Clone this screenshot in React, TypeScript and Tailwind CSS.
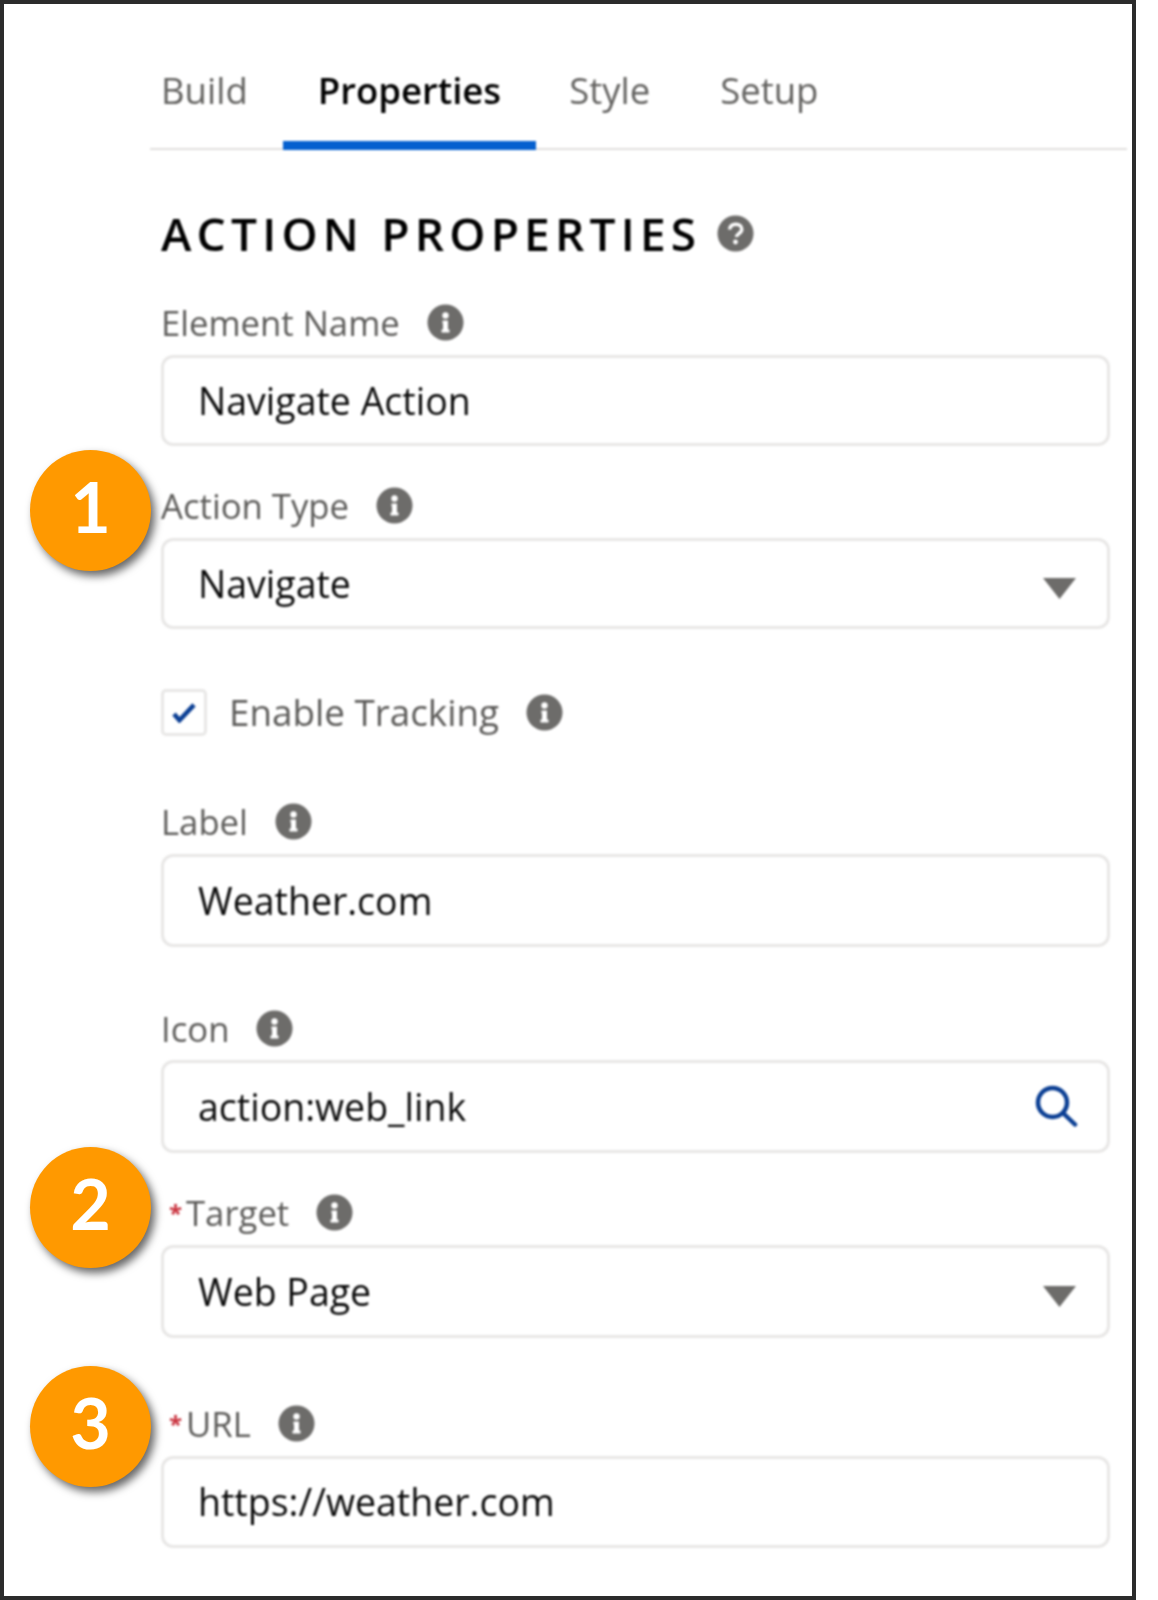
import React from "react";

const Info = () => (
  <svg width="37" height="37" viewBox="0 0 37 37" className="ml-[27px] shrink-0">
    <circle cx="18.5" cy="18.5" r="18" fill="#6d6c6a" />
    <circle cx="18.5" cy="11.5" r="3.2" fill="#fff" />
    <path d="M15.5 16.5h5.5v9h1.5v3h-8v-3h1.5v-6h-0.5z" fill="#fff" />
  </svg>
);

const Help = () => (
  <svg width="37" height="37" viewBox="0 0 37 37" className="ml-[16px] shrink-0">
    <circle cx="18.5" cy="18.5" r="18" fill="#6d6c6a" />
    <path d="M12.5 14.5c.5-3.6 3-5.3 6.3-5.3 3.500 0 6 2 6 5 0 2.400-1.500 3.500-3.200 4.600-1.300.9-2 1.600-2 3.200" fill="none" stroke="#fff" strokeWidth="3.400" />
    <circle cx="18.500" cy="27" r="2.400" fill="#fff" />
  </svg>
);

const Caret = () => (
  <svg width="33" height="21" viewBox="0 0 33 21" className="mt-[10px] shrink-0">
    <path d="M0 0h33L16.500 21z" fill="#6d6c6a" />
  </svg>
);

const Search = () => (
  <svg width="43" height="43" viewBox="0 0 43 43" className="shrink-0" fill="none" stroke="#0b3f94" strokeWidth="4.500">
    <circle cx="17.500" cy="17.500" r="14.500" />
    <path d="M28 28l12 11.500" strokeLinecap="round" />
  </svg>
);

function Input({
  value,
  right,
  rightClass = "pr-[31px]",
  heightClass = "h-[91px]",
}: {
  value: string;
  right?: React.ReactNode;
  rightClass?: string;
  heightClass?: string;
}) {
  return (
    <div className={`flex ${heightClass} w-[949px] items-center justify-between rounded-[12px] border-[3px] border-[#e8e7e6] bg-white pl-[34px] ${rightClass}`}>
      <span className="text-[37.500px] leading-[44px] text-[#0a0a0a]">{value}</span>
      {right}
    </div>
  );
}

function Field({
  label,
  required,
  value,
  right,
  rightClass,
  rowClass,
  heightClass,
}: {
  label: string;
  required?: boolean;
  value: string;
  right?: React.ReactNode;
  rightClass?: string;
  rowClass: string;
  heightClass?: string;
}) {
  return (
    <div>
      <div className={`flex h-[37px] items-center ${rowClass}`}>
        {required && <span className="ml-[8px] mr-[5px] w-[12px] text-[24px] font-bold leading-[37px] text-[#c9303c]">*</span>}
        <span className="text-[34.700px] leading-[37px] text-[#5c5b59]">{label}</span>
        <Info />
      </div>
      <Input value={value} right={right} rightClass={rightClass} heightClass={heightClass} />
    </div>
  );
}

function Badge({ n, className }: { n: string; className: string }) {
  return (
    <div
      className={`absolute left-[26px] flex h-[121px] w-[121px] items-center justify-center rounded-full bg-[#ff9900] pb-[9px] font-['Lato',sans-serif] text-[70px] font-bold leading-none text-white shadow-[4px_5px_8px_rgba(0,0,0,0.6)] ${className}`}
    >
      {n}
    </div>
  );
}

export default function App() {
  return (
    <div className="relative h-[1600px] w-[1136px] border-4 border-[#2b2b2b] bg-white font-['Open_Sans',sans-serif]">
      <div className="blur-[0.8px]">
        <nav className="ml-[146px] flex h-[146px] w-[977px] items-end border-b-2 border-[#e0dfde] text-[36.500px] leading-[48px] text-[#636260]">
          <a className="-mb-[2px] ml-[11px] flex h-[84px] items-start">Build</a>
          <a className="-mb-[2px] ml-[35px] flex h-[84px] items-start border-b-[9px] border-[#0560cf] px-[35px] font-semibold text-[#000000]">Properties</a>
          <a className="-mb-[2px] ml-[33px] flex h-[84px] items-start">Style</a>
          <a className="-mb-[2px] ml-[70px] flex h-[84px] items-start">Setup</a>
        </nav>

        <div className="ml-[157px]">
          <div className="mt-[60px] flex h-[46px] items-center">
            <h2 className="text-[46px] font-semibold leading-[46px] tracking-[5.200px] text-[#000000]">ACTION PROPERTIES</h2>
            <Help />
          </div>

          <Field rowClass="mt-[48px] mb-[14px]" label="Element Name" value="Navigate Action" />
          <Field rowClass="mt-[41px] mb-[14px]" label="Action Type" value="Navigate" right={<Caret />} />

          <div className="mt-[60px] flex h-[47px] items-center">
            <div className="flex h-[47px] w-[46px] items-center justify-center rounded-[5px] border-[3px] border-[#e8e7e6]">
              <svg width="24" height="20" viewBox="0 0 26 22" fill="none" stroke="#0b3f94" strokeWidth="5">
                <path d="M2 12l6 7L24 2" />
              </svg>
            </div>
            <span className="ml-[22px] text-[36.800px] leading-[47px] text-[#5c5b59]">Enable Tracking</span>
            <Info />
          </div>

          <Field rowClass="mt-[67px] mb-[14px]" label="Label" value="Weather.com" heightClass="h-[93px]" />
          <Field rowClass="mt-[63px] mb-[13px]" label="Icon" value="action:web_link" right={<Search />} rightClass="pr-[29px]" heightClass="h-[93px]" />
          <Field rowClass="mt-[41px] mb-[14px]" required label="Target" value="Web Page" right={<Caret />} heightClass="h-[93px]" />
          <Field rowClass="mt-[67px] mb-[14px]" required label="URL" value="https://weather.com" heightClass="h-[92px]" />
        </div>
      </div>

      <Badge n="1" className="top-[446px]" />
      <Badge n="2" className="top-[1143px]" />
      <Badge n="3" className="top-[1362px]" />
    </div>
  );
}
